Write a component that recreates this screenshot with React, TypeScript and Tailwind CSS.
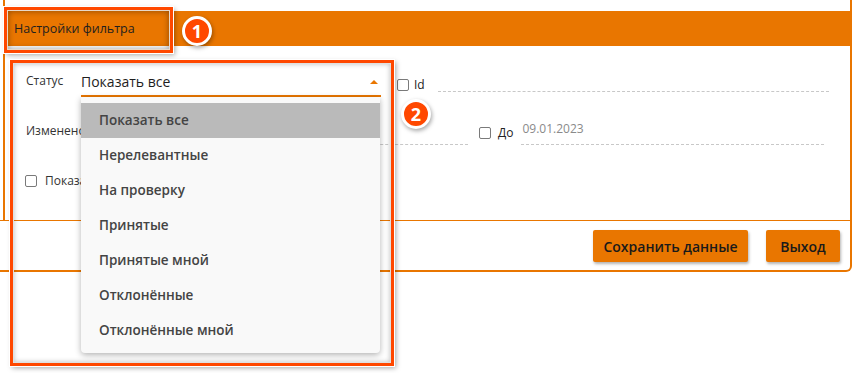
import React from 'react'

const items = [
  'Показать все',
  'Нерелевантные',
  'На проверку',
  'Принятые',
  'Принятые мной',
  'Отклонённые',
  'Отклонённые мной',
]

function Checkbox() {
  return <div className="w-[12px] h-[12px] border-[1.5px] border-[#7a7a7a] rounded-[2px] bg-white shrink-0" />
}

function Badge({ n }: { n: number }) {
  return (
    <div className="w-[30px] h-[30px] rounded-full bg-[#ff4800] border-[3px] border-white shadow-[1px_2px_4px_rgba(0,0,0,0.35)] flex items-center justify-center text-white font-bold text-[18px] leading-none">
      {n}
    </div>
  )
}

export default function App() {
  return (
    <div className="relative w-[866px] h-[373px] bg-white overflow-hidden font-['Open_Sans',sans-serif] text-[#222]">
      {/* Main frame */}
      <div className="ml-[3px] w-[849px] border-l-2 border-r-2 border-[#e97600]">
        <div className="h-[11px]" />
        {/* Header */}
        <div className="h-[35px] bg-[#e97600] flex items-center pl-[9px] pt-[2px] text-[12.5px] text-[#1f1f1f] -mr-[2px]">
          Настройки фильтра
        </div>

        {/* Filter form */}
        <div className="h-[174px] pl-[21px] pt-[22px]">
          <div className="flex items-start h-[29px]">
            <div className="w-[55px] text-[12px] text-[#333] pt-[4px]">Статус</div>
            <div className="w-[300px] h-[29px] border-b-2 border-[#e97600] flex items-center justify-between pr-[3px]">
              <span className="text-[14px] text-[#1e1e1e]">Показать все</span>
              <span className="w-0 h-0 border-l-[4px] border-r-[4px] border-b-[4px] border-l-transparent border-r-transparent border-b-[#e97600]" />
            </div>
            <div className="ml-[16px] mt-[8px] flex items-center">
              <Checkbox />
              <span className="ml-[5px] text-[12px]">Id</span>
            </div>
            <div className="ml-[13px] w-[391px] h-[24px] border-b border-dashed border-[#c8c8c8]" />
          </div>

          <div className="flex items-start h-[28px] mt-[21px]">
            <div className="w-[55px] text-[12px] text-[#333] pt-[4px]">Изменено</div>
            <div className="w-[387px] h-[27px] border-b border-dashed border-[#c8c8c8]" />
            <div className="ml-[11px] mt-[6px] flex items-center">
              <Checkbox />
              <span className="ml-[7px] text-[12px]">До</span>
            </div>
            <div className="ml-[8px] w-[303px] h-[27px] border-b border-dashed border-[#c8c8c8] text-[12px] text-[#8a8a8a] pt-[2px] pl-[1px]">
              09.01.2023
            </div>
          </div>

          <div className="flex items-center mt-[26px] -ml-[1px]">
            <Checkbox />
            <span className="ml-[8px] text-[12px] text-[#333]">Показать удалённые</span>
          </div>
        </div>
      </div>

      {/* Footer */}
      <div className="w-[852px] h-[52px] border-t border-b-2 border-r-2 border-[#e97600] rounded-br-[6px] flex items-start justify-end gap-[18px] pt-[9px] pr-[10px]">
        <button className="w-[155px] h-[32px] bg-[#e97600] rounded-[2px] shadow-[1px_2px_3px_rgba(0,0,0,0.3)] text-[14px] font-semibold text-[#1a1a1a]">
          Сохранить данные
        </button>
        <button className="w-[74px] h-[32px] bg-[#e97600] rounded-[2px] shadow-[1px_2px_3px_rgba(0,0,0,0.3)] text-[14px] font-semibold text-[#1a1a1a]">
          Выход
        </button>
      </div>

      {/* Dropdown list */}
      <div className="absolute left-[81px] top-[97px] w-[299px] h-[256px] bg-[#f9f9f9] rounded-b-[4px] shadow-[0_2px_6px_rgba(0,0,0,0.3)] pt-[6px]">
        {items.map((item, i) => (
          <div
            key={item}
            className={`h-[35px] flex items-center pl-[18px] text-[13.5px] font-semibold text-[#444] ${i === 0 ? 'bg-[#bababa]' : ''}`}
          >
            {item}
          </div>
        ))}
      </div>

      {/* Annotation 1 */}
      <div className="absolute left-[4px] top-[7px] w-[169px] h-[46px] border-[3px] border-[#ff4800] shadow-[0_0_0_1px_#fff,2px_2px_5px_rgba(0,0,0,0.35)]">
        <div className="w-full h-full border border-[#e8d8c8] shadow-[inset_0_0_6px_rgba(0,0,0,0.4)]" />
      </div>
      <div className="absolute left-[182px] top-[16px]">
        <Badge n={1} />
      </div>

      {/* Annotation 2 */}
      <div className="absolute left-[10px] top-[60px] w-[384px] h-[306px] border-[3px] border-[#ff4800] shadow-[0_0_0_1px_#fff,2px_2px_5px_rgba(0,0,0,0.35)]">
        <div className="w-full h-full border border-[#e0e0e0] shadow-[inset_0_0_5px_rgba(0,0,0,0.25)]" />
      </div>
      <div className="absolute left-[401px] top-[99px]">
        <Badge n={2} />
      </div>
    </div>
  )
}
